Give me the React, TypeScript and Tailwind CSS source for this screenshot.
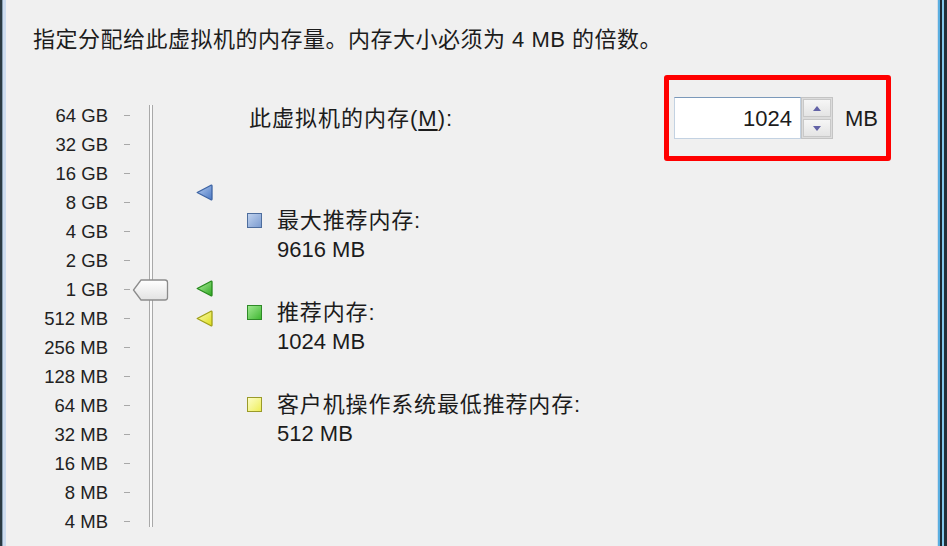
import React from "react";

const labels = [
  "64 GB",
  "32 GB",
  "16 GB",
  "8 GB",
  "4 GB",
  "2 GB",
  "1 GB",
  "512 MB",
  "256 MB",
  "128 MB",
  "64 MB",
  "32 MB",
  "16 MB",
  "8 MB",
  "4 MB",
];

function Tri({ id, light, dark, stroke }: { id: string; light: string; dark: string; stroke: string }) {
  return (
    <svg width="17" height="17" viewBox="0 0 17 17" className="block">
      <defs>
        <linearGradient id={id} x1="0" y1="0" x2="1" y2="1">
          <stop offset="0" stopColor={light} />
          <stop offset="1" stopColor={dark} />
        </linearGradient>
      </defs>
      <path d="M1.2 8.5 L15 1.2 Q16 0.9 16 2 L16 15 Q16 16.1 15 15.8 Z" fill={`url(#${id})`} stroke={stroke} strokeWidth="1.3" strokeLinejoin="round" />
    </svg>
  );
}

function LegendItem({ fill, border, title, value }: { fill: string; border: string; title: string; value: string }) {
  return (
    <div className="flex items-start">
      <div className="h-[29px] flex items-center">
        <div className={`w-[15px] h-[15px] border ${border} ${fill}`} />
      </div>
      <div className="ml-[15px] flex flex-col">
        <div className="h-[29px] leading-[29px] tracking-[0.85px] whitespace-nowrap">{title}</div>
        <div className="h-[29px] leading-[29px]">{value}</div>
      </div>
    </div>
  );
}

export default function App() {
  return (
    <div className="w-[947px] h-[546px] flex bg-[#f0f0f0] text-[#1c1c1c] text-[22px] overflow-hidden font-[family-name:'Liberation_Sans','Noto_Sans_CJK_SC',sans-serif]">
      <div className="w-[2px] bg-[#2a3a42]" />
      <div className="w-[1px] bg-[#8aa0b4]" />
      <div className="w-[3px] bg-[#cddcef]" />
      <div className="flex-1 flex flex-col pl-[27px] pt-[27px]">
        <div className="h-[26px] leading-[26px] whitespace-nowrap tracking-[0.5px]">
          指定分配给此虚拟机的内存量。内存大小必须为 4 MB 的倍数。
        </div>
        <div className="mt-[22px] flex items-start">
          {/* slider */}
          <div className="relative mt-[25.5px] flex">
            <div className="w-[75px] flex flex-col text-right text-[18.5px] text-[#222]">
              {labels.map((l) => (
                <div key={l} className="h-[29px] leading-[29px] whitespace-nowrap">
                  {l}
                </div>
              ))}
            </div>
            <div className="ml-[16px] w-[6px] flex flex-col">
              {labels.map((l) => (
                <div key={l} className="h-[29px] flex items-center">
                  <div className="w-[6px] h-[1px] bg-[#a8a8a8]" />
                </div>
              ))}
            </div>
            <div className="ml-[19px] mt-[4.5px] mb-[8.5px] w-[4px] border-x border-[#a9a9a9] bg-[#fafafa]" />
            <svg width="37" height="24" viewBox="0 0 37 24" className="absolute left-[99px] top-[177px]">
              <defs>
                <linearGradient id="thumb" x1="0" y1="0" x2="0" y2="1">
                  <stop offset="0" stopColor="#ffffff" />
                  <stop offset="1" stopColor="#e2e2e2" />
                </linearGradient>
              </defs>
              <path d="M1.5 12 L9 2 L33 2 Q35.5 2 35.5 4.5 L35.5 19.5 Q35.5 22 33 22 L9 22 Z" fill="url(#thumb)" stroke="#8c8c8c" strokeWidth="1.3" strokeLinejoin="round" />
            </svg>
            <div className="ml-[43px] flex flex-col">
              <div className="mt-[83px]">
                <Tri id="tb" light="#b7cdf0" dark="#4a78c4" stroke="#3d64a4" />
              </div>
              <div className="mt-[79px]">
                <Tri id="tg" light="#b6f0a6" dark="#2ca81e" stroke="#268a1c" />
              </div>
              <div className="mt-[13px]">
                <Tri id="ty" light="#fcfcb8" dark="#dede1a" stroke="#a0a018" />
              </div>
            </div>
          </div>
          {/* right panel */}
          <div className="ml-[34px] w-[644px] flex flex-col">
            <div className="flex items-center justify-between">
              <div className="ml-[2px] whitespace-nowrap tracking-[1px]">
                此虚拟机的内存(<span className="underline underline-offset-[3px]">M</span>):
              </div>
              <div className="w-[227px] h-[86px] border-[5px] border-[#ff0000] rounded-[3px] flex items-center pl-[5px]">
                <div className="w-[127px] h-[42px] bg-white border border-[#c3d2e2] border-t-[#7b99ba] flex items-center justify-end pr-[8px]">
                  1024
                </div>
                <div className="w-[32px] h-[42px] flex flex-col gap-[2px] bg-[#dcdcdc] border border-[#c4c4c4] p-[1px]">
                  <div className="flex-1 bg-gradient-to-b from-[#f6f6f6] to-[#e4e4e4] border border-[#c8c8c8] flex items-center justify-center">
                    <div className="w-0 h-0 border-x-[4px] border-x-transparent border-b-[5px] border-b-[#6262a6]" />
                  </div>
                  <div className="flex-1 bg-gradient-to-b from-[#f6f6f6] to-[#e4e4e4] border border-[#c8c8c8] flex items-center justify-center">
                    <div className="w-0 h-0 border-x-[4px] border-x-transparent border-t-[5px] border-t-[#6262a6]" />
                  </div>
                </div>
                <div className="ml-[12px]">MB</div>
              </div>
            </div>
            <div className="mt-[45px] flex flex-col gap-[34px]">
              <LegendItem fill="bg-gradient-to-br from-[#c0d2ee] to-[#7c9cd0]" border="border-[#4d6d9d]" title="最大推荐内存:" value="9616 MB" />
              <LegendItem fill="bg-gradient-to-br from-[#9de88e] to-[#3cb82e]" border="border-[#2f8a28]" title="推荐内存:" value="1024 MB" />
              <LegendItem fill="bg-gradient-to-br from-[#fdfdc4] to-[#eeee50]" border="border-[#9a9a2a]" title="客户机操作系统最低推荐内存:" value="512 MB" />
            </div>
          </div>
        </div>
      </div>
      <div className="w-[1px] bg-[#d2dde8]" />
      <div className="w-[2px] bg-[#5aaee0]" />
      <div className="w-[2px] bg-[#1c2a32]" />
      <div className="w-[2px] bg-[#84c8ea]" />
      <div className="w-[3px] bg-[#222f37]" />
    </div>
  );
}
